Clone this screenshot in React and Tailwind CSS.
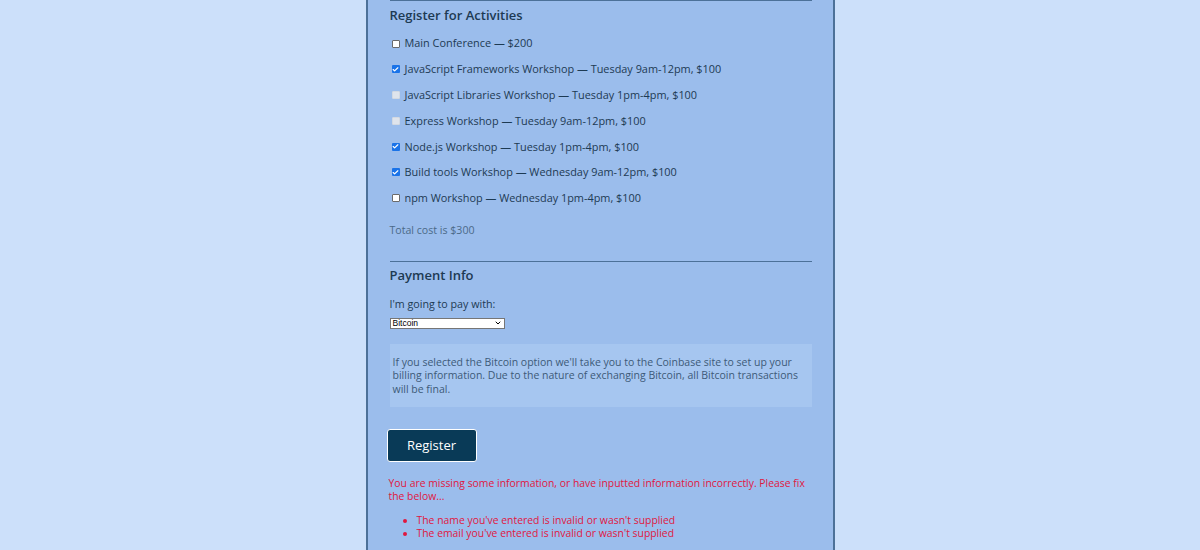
import { Check, ChevronDown } from 'lucide-react';

const ACTIVITIES = [
  { label: 'Main Conference — $200', state: 'off' },
  { label: 'JavaScript Frameworks Workshop — Tuesday 9am-12pm, $100', state: 'on' },
  { label: 'JavaScript Libraries Workshop — Tuesday 1pm-4pm, $100', state: 'disabled' },
  { label: 'Express Workshop — Tuesday 9am-12pm, $100', state: 'disabled' },
  { label: 'Node.js Workshop — Tuesday 1pm-4pm, $100', state: 'on' },
  { label: 'Build tools Workshop — Wednesday 9am-12pm, $100', state: 'on' },
  { label: 'npm Workshop — Wednesday 1pm-4pm, $100', state: 'off' }
];

function Box({ state }) {
  if (state === 'on') {
    return (
      <span className="w-[8px] h-[8px] shrink-0 rounded-[1px] bg-[#1a73e8] flex items-center justify-center">
        <Check size={7} strokeWidth={4} className="text-white" />
      </span>
    );
  }
  if (state === 'disabled') {
    return <span className="w-[8px] h-[8px] shrink-0 rounded-[1px] bg-[#dfe4ec] border border-[#d3d9e2]" />;
  }
  return <span className="w-[8px] h-[8px] shrink-0 rounded-[1px] bg-white border border-[#6b6b6b]" />;
}

export default function App() {
  return (
    <div
      className="w-[1200px] h-[550px] overflow-hidden bg-[#cce0fa] flex justify-center"
      style={{ fontFamily: '"Open Sans", Lato, sans-serif' }}
    >
      <div className="w-[469px] h-full bg-[#9bbdec] border-x-2 border-[#4c7198] pl-[22px] pr-[21px] text-[#1d3a53]">
        {/* Activities */}
        <div className="border-t border-[#4c7198]">
          <h2 className="text-[13px] font-semibold leading-none mt-[8px]">Register for Activities</h2>
          <div className="mt-[14px] flex flex-col gap-[10.8px]">
            {ACTIVITIES.map(a => (
              <label key={a.label} className="flex items-center gap-[5px] pl-[2px] h-[15px] text-[10.9px] whitespace-nowrap">
                <Box state={a.state} />
                <span>{a.label}</span>
              </label>
            ))}
          </div>
          <p className="mt-[17px] text-[10.6px] leading-[14px] text-[#4b6a88]">Total cost is $300</p>
        </div>

        {/* Payment */}
        <div className="border-t border-[#4c7198] mt-[24px]">
          <h2 className="text-[13px] font-semibold leading-none mt-[7px]">Payment Info</h2>
          <p className="mt-[15px] text-[10.7px] leading-[14px]">I'm going to pay with:</p>
          <div className="mt-[7px] w-[115px] h-[11px] bg-white border border-[#767676] flex items-center justify-between px-[2px] text-[8.5px] text-black leading-none" style={{ fontFamily: '"Liberation Sans", Arial, sans-serif' }}>
            <span>Bitcoin</span>
            <ChevronDown size={8} strokeWidth={3} />
          </div>
          <div className="mt-[15px] bg-[#a6c6f0] px-[3px] pt-[12px] pb-[11px] text-[10.5px] leading-[13.5px] text-[#3d5a78]">
            If you selected the Bitcoin option we'll take you to the Coinbase site to set up your billing information. Due to the nature of exchanging Bitcoin, all Bitcoin transactions will be final.
          </div>
        </div>

        {/* Submit */}
        <button className="mt-[22px] -ml-[3px] w-[90px] h-[33px] rounded-[3px] bg-[#093a57] border border-white text-white text-[13px] font-medium">
          Register
        </button>

        <div className="mt-[15px] -ml-[1px] text-[10.4px] leading-[13px] text-[#e0173f]">
          <p>You are missing some information, or have inputted information incorrectly. Please fix the below...</p>
          <ul className="mt-[11px] pl-[28px] list-disc">
            <li>The name you've entered is invalid or wasn't supplied</li>
            <li>The email you've entered is invalid or wasn't supplied</li>
          </ul>
        </div>
      </div>
    </div>
  );
}
